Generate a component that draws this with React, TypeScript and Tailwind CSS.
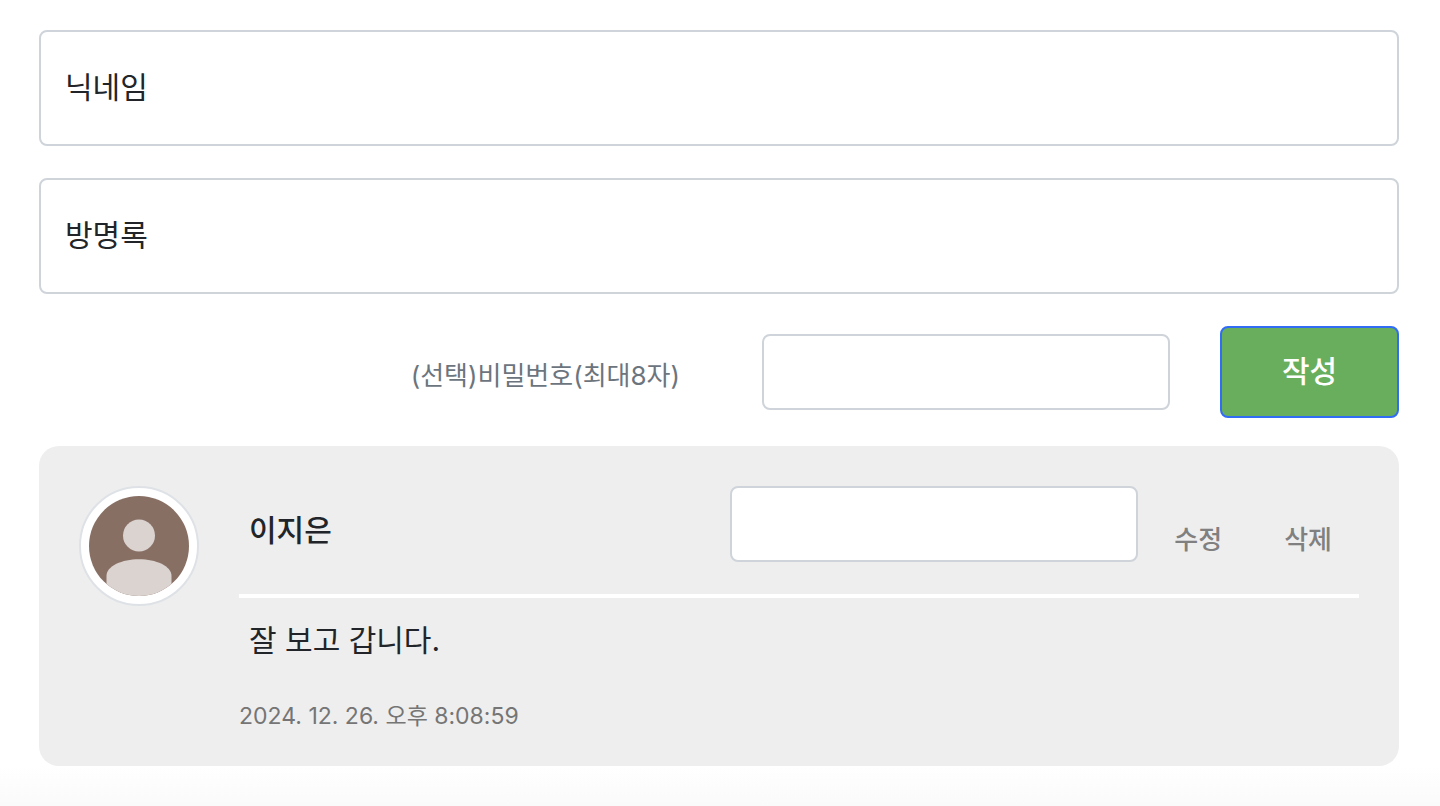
import { useState } from "react";
import type { FormEvent } from "react";

type GuestbookEntry = {
  id: number;
  name: string;
  message: string;
  createdAt: string;
};

const entries: GuestbookEntry[] = [
  { id: 1, name: "이지은", message: "잘 보고 갑니다.", createdAt: "2024. 12. 26. 오후 8:08:59" },
];

export default function App() {
  const [nickname, setNickname] = useState("");
  const [message, setMessage] = useState("");

  function handleSubmit(event: FormEvent) {
    event.preventDefault();
  }

  return (
    <main className="min-h-screen bg-white pt-[30px] font-['Inter','Noto_Sans_CJK_KR',sans-serif] text-[#212529]">
      <div className="pr-[41px] pl-[39px]">
        <form onSubmit={handleSubmit}>
          <div className="flex flex-col gap-8">
            <FloatingField id="nickname" label="닉네임" value={nickname} onChange={setNickname} />
            <FloatingField id="message" label="방명록" value={message} onChange={setMessage} />
          </div>
          <div className="mt-8 flex items-center justify-end">
            <label htmlFor="password" className="mr-[82px] pt-2 text-[26px] leading-10 text-[#6c757d]">
              (선택)비밀번호(최대8자)
            </label>
            <input
              id="password"
              type="password"
              maxLength={8}
              className="h-[76px] w-3/10 rounded-lg border-2 border-[#ced4da] bg-white px-6 text-[26px]"
            />
            <button
              type="submit"
              className="ml-[50px] h-[92px] w-[179px] rounded-lg border-2 border-[#316cf4] bg-[#68ae5c] pb-0.5 text-3xl font-medium text-white"
            >
              작성
            </button>
          </div>
        </form>

        <ul className="mt-7">
          {entries.map((entry) => (
            <EntryCard key={entry.id} entry={entry} />
          ))}
        </ul>
      </div>
      <div className="h-10 bg-linear-to-b from-white to-[#fafafa]" />
    </main>
  );
}

type FloatingFieldProps = {
  id: string;
  label: string;
  value: string;
  onChange: (value: string) => void;
};

function FloatingField({ id, label, value, onChange }: FloatingFieldProps) {
  return (
    <div className="relative">
      <input
        id={id}
        type="text"
        value={value}
        onChange={(event) => onChange(event.target.value)}
        className="block h-[116px] w-full rounded-lg border-2 border-[#ced4da] bg-white px-6 text-3xl"
      />
      {value ? null : (
        <label htmlFor={id} className="pointer-events-none absolute inset-y-0 left-0 flex items-center px-[26px] pb-0.5 text-3xl">
          {label}
        </label>
      )}
    </div>
  );
}

function EntryCard({ entry }: { entry: GuestbookEntry }) {
  return (
    <li className="flex gap-10 rounded-[20px] bg-[#eee] p-10">
      <Avatar />
      <div className="min-w-0 flex-1">
        <div className="flex items-start border-b-4 border-white pb-8">
          <h2 className="flex-1 px-2.5 pt-6 text-3xl leading-10 font-medium">{entry.name}</h2>
          <input
            type="password"
            maxLength={8}
            aria-label="비밀번호"
            className="h-[76px] w-[408px] rounded-lg border-2 border-[#ced4da] bg-white px-6 text-[26px]"
          />
          <div className="flex gap-[62px] pt-[34px] pr-[27px] pl-9 text-[26px] leading-10 text-[#808080]">
            <button type="button" className="font-medium">수정</button>
            <button type="button" className="font-medium">삭제</button>
          </div>
        </div>
        <p className="px-2.5 pt-[22px] text-3xl leading-10">{entry.message}</p>
        <p className="mt-10 -mb-1.5 text-[23px] leading-8 text-[#757575]">{entry.createdAt}</p>
      </div>
    </li>
  );
}

function Avatar() {
  return (
    <div className="size-[120px] shrink-0 rounded-full border-2 border-[#dee2e6] bg-white p-2">
      <svg viewBox="0 0 100 100" className="size-full overflow-hidden rounded-full" role="img" aria-label="프로필">
        <rect width="100" height="100" fill="#886f64" />
        <circle cx="50" cy="39.5" r="16" fill="#dbd3d0" />
        <path d="M17.5 100V80C17.5 70 33 63.300 50 63.300S82.500 70 82.500 80v20z" fill="#dbd3d0" />
      </svg>
    </div>
  );
}
